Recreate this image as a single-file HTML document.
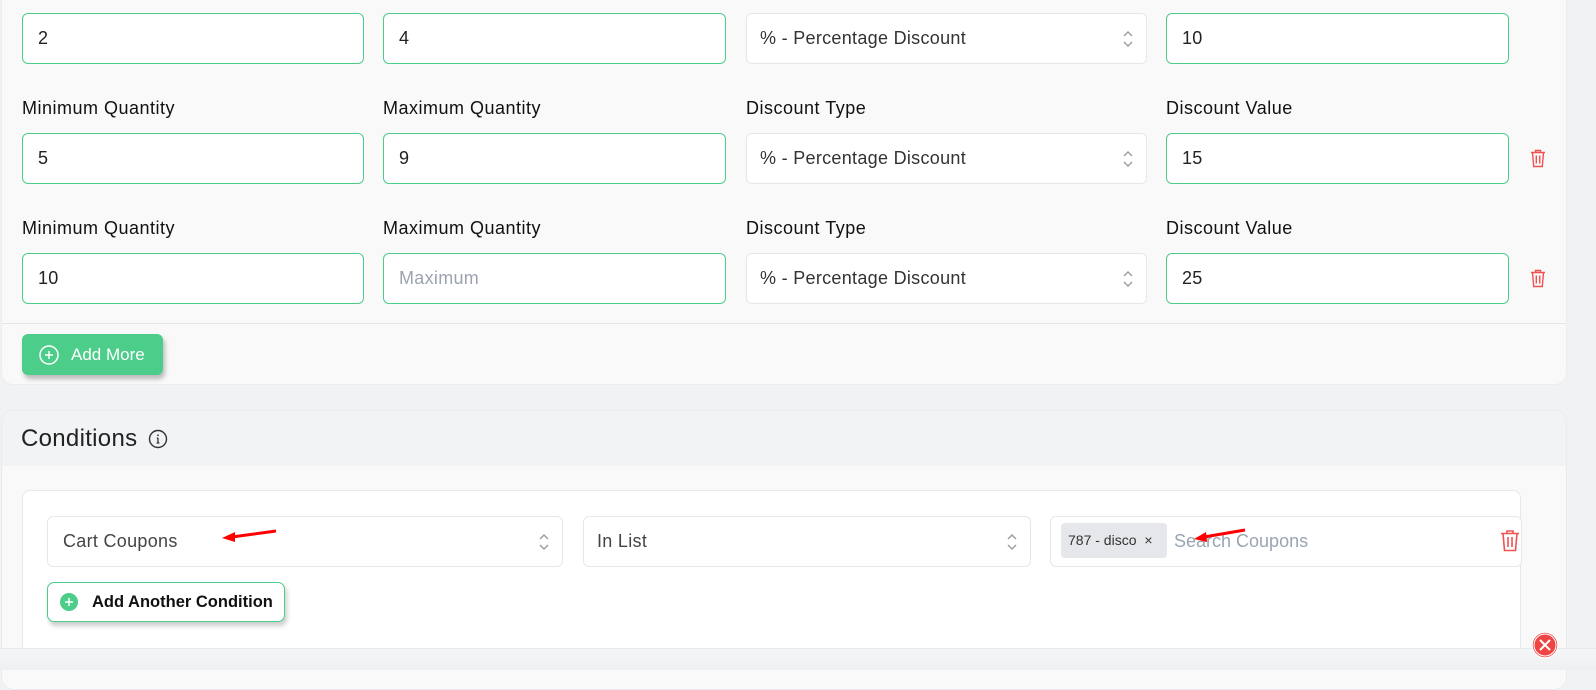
<!DOCTYPE html>
<html><head><meta charset="utf-8"><style>
*{box-sizing:border-box;margin:0;padding:0}
body{width:1596px;height:670px;background:#f1f2f4;font-family:"Liberation Sans",sans-serif;position:relative;overflow:hidden;color:#1f2328}
.abs{position:absolute}
.card1{left:1px;top:-10px;width:1566px;height:395px;background:#f9f9f9;border:1px solid #ebedf0;border-radius:12px}
.inp{position:absolute;height:51px;background:#fff;border:1px solid #4ccd8a;border-radius:6px;font-size:18px;letter-spacing:.3px;padding-left:15px;line-height:49px;color:#222}
.sel{position:absolute;height:51px;background:#fff;border:1px solid #e5e7eb;border-radius:6px;font-size:18px;letter-spacing:.3px;padding-left:13px;line-height:49px;color:#333}
.lab{position:absolute;font-size:18px;letter-spacing:.5px;color:#111}
.chev{position:absolute;right:12px;top:16px}
.trash{position:absolute}
</style></head><body>
<div class="abs card1"></div>

<div class="inp" style="left:22px;top:13px;width:342px">2</div>
<div class="inp" style="left:383px;top:13px;width:343px">4</div>
<div class="sel" style="left:746px;top:13px;width:401px">% - Percentage Discount<svg class="chev" width="12" height="18" viewBox="0 0 12 18"><path d="M2 6l4-4 4 4M2 12l4 4 4-4" fill="none" stroke="#9aa0a6" stroke-width="1.5"/></svg></div>
<div class="inp" style="left:1166px;top:13px;width:343px">10</div>

<div class="lab" style="left:22px;top:98px">Minimum Quantity</div>
<div class="lab" style="left:383px;top:98px">Maximum Quantity</div>
<div class="lab" style="left:746px;top:98px">Discount Type</div>
<div class="lab" style="left:1166px;top:98px">Discount Value</div>
<div class="inp" style="left:22px;top:133px;width:342px">5</div>
<div class="inp" style="left:383px;top:133px;width:343px">9</div>
<div class="sel" style="left:746px;top:133px;width:401px">% - Percentage Discount<svg class="chev" width="12" height="18" viewBox="0 0 12 18"><path d="M2 6l4-4 4 4M2 12l4 4 4-4" fill="none" stroke="#9aa0a6" stroke-width="1.5"/></svg></div>
<div class="inp" style="left:1166px;top:133px;width:343px">15</div>
<svg class="trash" style="left:1530px;top:149px" width="16" height="19" viewBox="0 0 16 19"><path d="M1 3.5h14M5.5 3.5V1.5h5v2M2.5 3.5l1.2 14h8.6l1.2-14M6.3 6.5v8M9.7 6.5v8" fill="none" stroke="#f05252" stroke-width="1.4"/></svg>

<div class="lab" style="left:22px;top:218px">Minimum Quantity</div>
<div class="lab" style="left:383px;top:218px">Maximum Quantity</div>
<div class="lab" style="left:746px;top:218px">Discount Type</div>
<div class="lab" style="left:1166px;top:218px">Discount Value</div>
<div class="inp" style="left:22px;top:253px;width:342px">10</div>
<div class="inp" style="left:383px;top:253px;width:343px;color:#9ca3af">Maximum</div>
<div class="sel" style="left:746px;top:253px;width:401px">% - Percentage Discount<svg class="chev" width="12" height="18" viewBox="0 0 12 18"><path d="M2 6l4-4 4 4M2 12l4 4 4-4" fill="none" stroke="#9aa0a6" stroke-width="1.5"/></svg></div>
<div class="inp" style="left:1166px;top:253px;width:343px">25</div>
<svg class="trash" style="left:1530px;top:269px" width="16" height="19" viewBox="0 0 16 19"><path d="M1 3.5h14M5.5 3.5V1.5h5v2M2.5 3.5l1.2 14h8.6l1.2-14M6.3 6.5v8M9.7 6.5v8" fill="none" stroke="#f05252" stroke-width="1.4"/></svg>

<div class="abs" style="left:2px;top:323px;width:1564px;height:1px;background:#e3e5e8"></div>
<div class="abs" style="left:22px;top:334px;width:141px;height:41px;background:#4ccd8a;border-radius:6px;box-shadow:2px 4px 5px rgba(0,0,0,.25);color:#fff;font-size:17px;line-height:41px;padding-left:49px">Add More</div>
<svg class="abs" style="left:38px;top:344px" width="22" height="22" viewBox="0 0 22 22"><circle cx="11" cy="11" r="9" fill="none" stroke="#fff" stroke-width="1.5"/><path d="M11 7v8M7 11h8" stroke="#fff" stroke-width="1.4"/></svg>

<div class="abs" style="left:1px;top:410px;width:1566px;height:280px;background:#f9f9f9;border:1px solid #e9ebee;border-radius:12px;overflow:hidden">
 <div style="height:55px;background:#f2f3f5"></div>
</div>
<div class="abs" style="left:21px;top:425px;font-size:24px;letter-spacing:.3px;color:#222">Conditions</div>
<svg class="abs" style="left:148px;top:429px" width="20" height="20" viewBox="0 0 20 20"><circle cx="10" cy="10" r="8.5" fill="none" stroke="#333" stroke-width="1.4"/><path d="M10 9v5M8.6 14h2.8M8.8 9H10" stroke="#333" stroke-width="1.3"/><circle cx="10" cy="6.3" r="0.9" fill="#333"/></svg>

<div class="abs" style="left:22px;top:490px;width:1499px;height:170px;background:#fff;border:1px solid #e5e7eb;border-radius:8px"></div>
<div class="sel" style="left:47px;top:516px;width:516px;padding-left:15px;color:#444">Cart Coupons<svg class="chev" width="12" height="18" viewBox="0 0 12 18"><path d="M2 6l4-4 4 4M2 12l4 4 4-4" fill="none" stroke="#9aa0a6" stroke-width="1.5"/></svg></div>
<div class="sel" style="left:583px;top:516px;width:448px;color:#444">In List<svg class="chev" width="12" height="18" viewBox="0 0 12 18"><path d="M2 6l4-4 4 4M2 12l4 4 4-4" fill="none" stroke="#9aa0a6" stroke-width="1.5"/></svg></div>
<div class="sel" style="left:1050px;top:516px;width:472px;padding-left:0"></div>
<div class="abs" style="left:1061px;top:523px;width:106px;height:35px;background:#e5e7eb;border-radius:4px;font-size:14px;line-height:35px;padding-left:7px;color:#333">787 - disco <span style="margin-left:4px">×</span></div>
<div class="abs" style="left:1174px;top:531px;font-size:18px;color:#9aa5b1">Search Coupons</div>
<svg class="trash" style="left:1500px;top:529px" width="20" height="23" viewBox="0 0 20 23"><path d="M1 4.5h18M7 4.5V2h6v2.5M3 4.5l1.5 17h11l1.5-17M8 8v10M12 8v10" fill="none" stroke="#f05252" stroke-width="1.6"/></svg>

<svg class="abs" style="left:220px;top:528px" width="60" height="16" viewBox="0 0 60 16"><path d="M56 3L12 9" stroke="#f00" stroke-width="3"/><path d="M2 10l13-6v10z" fill="#f00"/></svg>
<svg class="abs" style="left:1192px;top:528px" width="55" height="16" viewBox="0 0 55 16"><path d="M53 2L12 9" stroke="#f00" stroke-width="3"/><path d="M2 11l12-7 1 10z" fill="#f00"/></svg>

<div class="abs" style="left:47px;top:582px;width:238px;height:40px;background:#fff;border:1px solid #4ccd8a;border-radius:7px;box-shadow:2px 4px 5px rgba(0,0,0,.2);font-size:16.5px;font-weight:bold;line-height:38px;padding-left:44px;color:#111">Add Another Condition</div>
<svg class="abs" style="left:60px;top:593px" width="18" height="18" viewBox="0 0 18 18"><circle cx="9" cy="9" r="9" fill="#4ccd8a"/><path d="M9 5v8M5 9h8" stroke="#fff" stroke-width="1.5"/></svg>

<div class="abs" style="left:0;top:648px;width:1596px;height:22px;background:linear-gradient(#f5f6f7,#eeeff1);border-top:1px solid #e5e7eb"></div>
<svg class="abs" style="left:1530px;top:630px" width="30" height="30" viewBox="0 0 30 30"><circle cx="15" cy="15" r="13" fill="#ef4444" stroke="#fff" stroke-width="1.5"/><circle cx="15" cy="15" r="11" fill="none" stroke="#fff" stroke-width="1"/><path d="M10 10l10 10M20 10L10 20" stroke="#fff" stroke-width="2"/></svg>
</body></html>
